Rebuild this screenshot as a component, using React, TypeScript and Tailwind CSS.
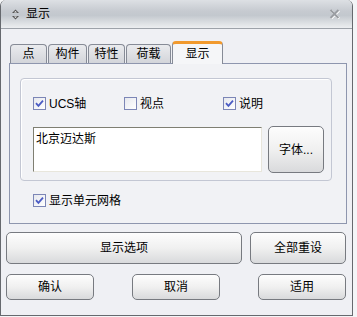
import React from "react";

const font = { fontFamily: '"Liberation Sans", "Noto Sans CJK SC", sans-serif' };

function Check({ checked }: { checked: boolean }) {
  return (
    <div className="w-[13px] h-[13px] border border-[#7c86b6] bg-gradient-to-br from-[#e6e8ee] to-[#ffffff] flex items-center justify-center shrink-0">
      {checked && (
        <svg width="9" height="9" viewBox="0 0 9 9">
          <path d="M1 4.2 L3.4 6.8 L8 1.6" stroke="#4b5cc4" strokeWidth="1.8" fill="none" />
        </svg>
      )}
    </div>
  );
}

function Btn({ label, className }: { label: string; className: string }) {
  return (
    <div
      className={
        "rounded-[5px] border border-[#777a80] bg-gradient-to-b from-[#fdfdfd] via-[#f0f0f0] to-[#d9dadc] flex items-center justify-center text-[12px] text-black shrink-0 " +
        className
      }
    >
      {label}
    </div>
  );
}

export default function App() {
  const tabs = [
    { label: "点", w: "w-[37px]" },
    { label: "构件", w: "w-[39px]" },
    { label: "特性", w: "w-[37px]" },
    { label: "荷载", w: "w-[45px]" },
  ];
  return (
    <div className="w-[357px] h-[317px] bg-[#f4f5f7] overflow-hidden" style={font}>
      <div className="w-[353px] h-[316px] border-l border-r border-b border-[#66696e] rounded-t-[6px] bg-[#eff0f4] flex flex-col overflow-hidden">
        {/* title bar */}
        <div className="h-[29px] shrink-0 border-b border-[#9da2a9] bg-[linear-gradient(to_bottom,#dde0e4_0%,#c6cad0_40%,#c3c8ce_55%,#dfe2e5_85%,#eceef0_100%)] flex items-center pl-[10px] pr-[12px]">
          <svg width="9" height="11" viewBox="0 0 9 11" className="mr-[6px]">
            <path d="M4.5 0.5 L8 4 L1 4 Z" fill="#555" />
            <path d="M4.5 10.5 L8 7 L1 7 Z" fill="#555" />
            <path d="M4.5 2 L6 3.4 L3 3.4 Z" fill="#fff" />
            <path d="M4.5 9 L6 7.6 L3 7.6 Z" fill="#fff" />
          </svg>
          <span className="text-[12px] text-black leading-none">显示</span>
          <div className="flex-1" />
          <svg width="11" height="10" viewBox="0 0 11 10">
            <path d="M1.5 1 L9.5 9 M9.5 1 L1.5 9" stroke="#fff" strokeWidth="2.4" transform="translate(0.6,0.6)" />
            <path d="M1.5 1 L9.5 9 M9.5 1 L1.5 9" stroke="#9a9da2" strokeWidth="2" />
          </svg>
        </div>

        <div className="pl-[8px] pt-[12px] flex flex-col">
          {/* tabs */}
          <div className="flex items-end h-[22px] ml-[1px] relative z-10">
            {tabs.map((t) => (
              <div
                key={t.label}
                className={
                  t.w +
                  " h-[19px] mr-px rounded-t-[4px] border border-b-0 border-[#868b96] bg-gradient-to-b from-[#eaebee] to-[#d3d5da] flex items-center justify-center text-[12px] text-black"
                }
              >
                {t.label}
              </div>
            ))}
            <div className="w-[51px] h-[23px] -mb-px rounded-t-[4px] border border-b-0 border-[#868b96] border-t-[3px] border-t-[#f19a2e] bg-[#f5f6f8] flex items-center justify-center text-[12px] text-black">
              显示
            </div>
          </div>
          {/* tab panel */}
          <div className="w-[338px] h-[161px] border border-[#8e96ae] bg-[#f1f2f5] flex flex-col pl-[10px] pt-[14px]">
            <div className="w-[312px] h-[103px] rounded-[4px] border border-[#c3c7d3] shadow-[inset_1px_1px_0_#ffffff] flex flex-col pl-[12px] pt-[18px]">
              <div className="flex items-center h-[13px] text-[12px] text-black">
                <Check checked />
                <span className="ml-[3px] w-[75px]">UCS轴</span>
                <Check checked={false} />
                <span className="ml-[3px] w-[83px]">视点</span>
                <Check checked />
                <span className="ml-[3px]">说明</span>
              </div>
              <div className="flex mt-[16px]">
                <div className="w-[229px] h-[45px] border border-[#7f7f72] border-r-[#e8e6dc] border-b-[#e8e6dc] bg-white pl-[2px] pt-[5px] text-[12px] text-black leading-none mt-[1px]">
                  北京迈达斯
                </div>
                <Btn label="字体..." className="w-[56px] h-[47px] ml-[6px]" />
              </div>
            </div>
            <div className="flex items-center mt-[13px] ml-[13px] text-[12px] text-black h-[13px]">
              <Check checked />
              <span className="ml-[3px]">显示单元网格</span>
            </div>
          </div>
        </div>

        <div className="flex pl-[5px] mt-[8px]">
          <Btn label="显示选项" className="w-[236px] h-[32px]" />
          <Btn label="全部重设" className="w-[96px] h-[32px] ml-[8px]" />
        </div>
        <div className="flex pl-[5px] mt-[10px]">
          <Btn label="确认" className="w-[88px] h-[26px]" />
          <Btn label="取消" className="w-[88px] h-[26px] ml-[38px]" />
          <Btn label="适用" className="w-[88px] h-[26px] ml-[38px]" />
        </div>
      </div>
    </div>
  );
}
